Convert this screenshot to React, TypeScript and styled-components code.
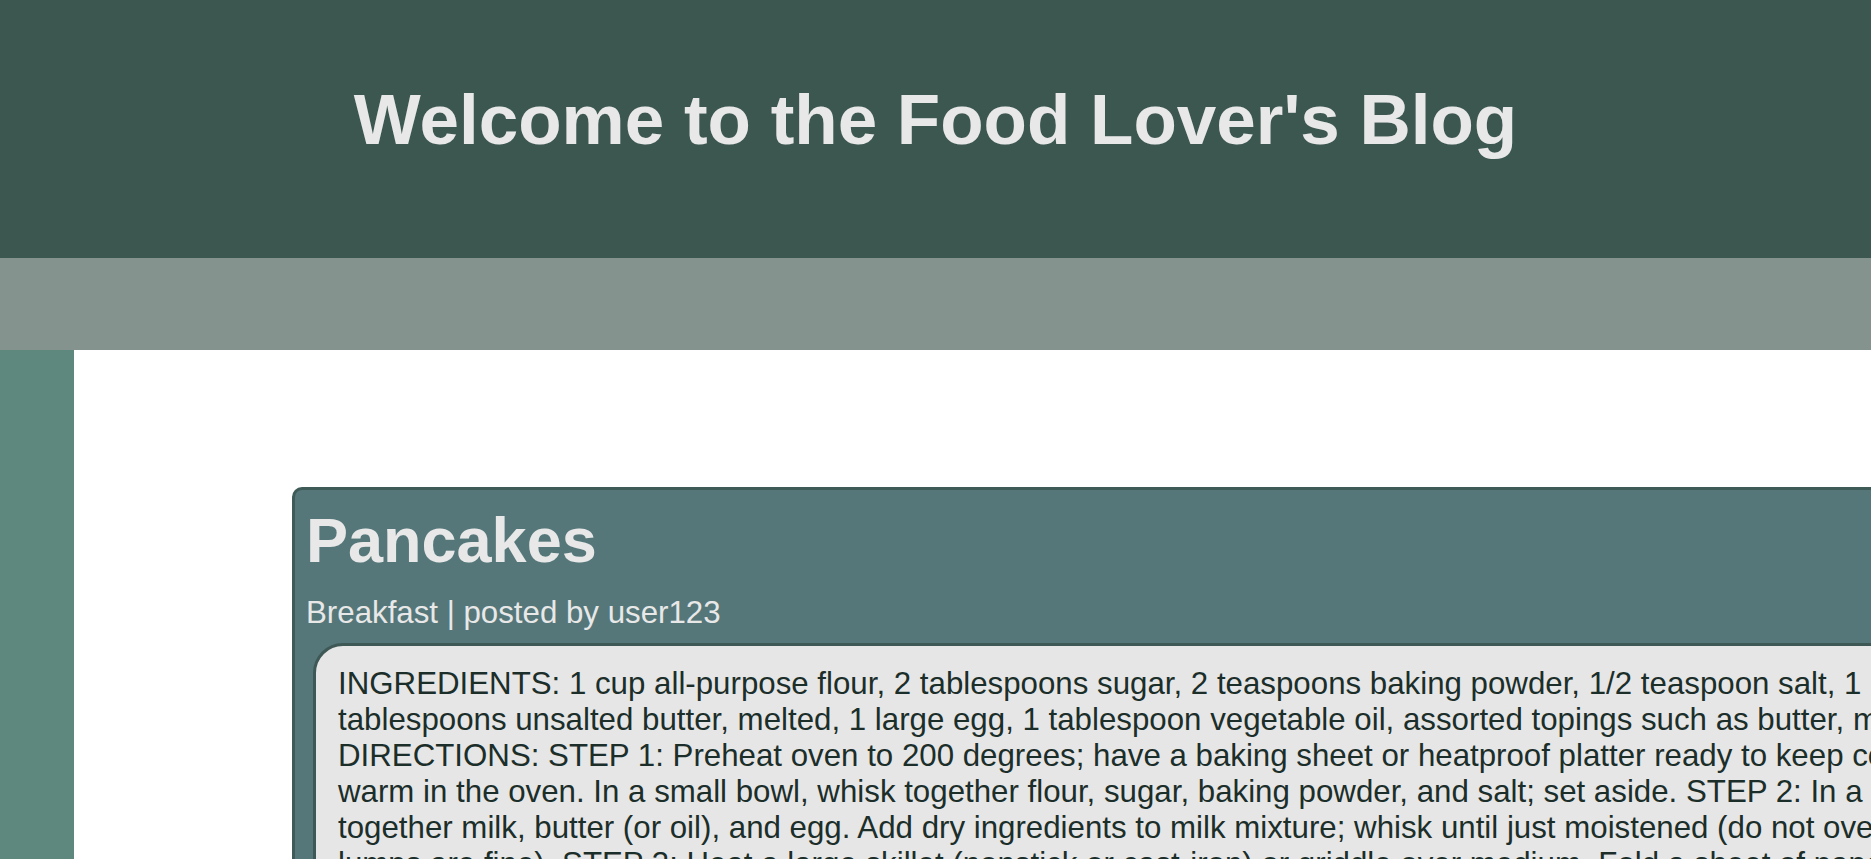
import React from 'react'
import styled, { createGlobalStyle } from 'styled-components'

const GlobalStyle = createGlobalStyle`
  html, body {
    margin: 0;
    padding: 0;
    overflow: hidden;
    background: #ffffff;
  }

  body {
    font-family: 'Liberation Sans', Arial, Helvetica, sans-serif;
  }
`

const Header = styled.header`
  background-color: #3c5750;
  box-sizing: border-box;
  height: 258px;
  padding-top: 79px;
  text-align: center;
`

const SiteTitle = styled.h1`
  color: #e8e8e8;
  font-size: 71px;
  font-weight: 700;
  margin: 0;
`

const NavBar = styled.nav`
  background-color: #84938e;
  height: 92px;
`

const Body = styled.div`
  display: flex;
  min-height: 509px;
`

const Sidebar = styled.aside`
  background-color: #5e877d;
  flex: none;
  width: 74px;
`

const Main = styled.main`
  flex: 1;
  min-width: 0;
  overflow: hidden;
  padding: 137px 0 40px 218px;
`

const PostCard = styled.article`
  background-color: #557779;
  border: 3px solid #3f5b58;
  border-radius: 10px;
  display: inline-block;
  padding: 14px 9px 12px 9px;
`

const PostTitle = styled.h2`
  color: #e8e8e8;
  font-size: 63px;
  font-weight: 700;
  margin: 0 0 19px 2px;
`

const PostMeta = styled.div`
  color: #e8e8e8;
  font-size: 31.25px;
  margin: 0 0 12px 2px;
`

const RecipeBox = styled.div`
  background-color: #e6e6e6;
  border: 3px solid #3d5855;
  border-radius: 30px 0 0 0;
  color: #1c2e2a;
  font-size: 31.25px;
  margin-left: 9px;
  padding: 20px 20px 20px 22px;
  width: 58.45em;
`

const RecipeText = styled.p`
  margin: 0;
`

const ingredients =
  'INGREDIENTS: 1 cup all-purpose flour, 2 tablespoons sugar, 2 teaspoons baking powder, 1/2 teaspoon salt, 1 cup milk, 2 tablespoons unsalted butter, melted, 1 large egg, 1 tablespoon vegetable oil, assorted topings such as butter, maple syrup.'

const directions =
  'DIRECTIONS: STEP 1: Preheat oven to 200 degrees; have a baking sheet or heatproof platter ready to keep cooked pancakes warm in the oven. In a small bowl, whisk together flour, sugar, baking powder, and salt; set aside. STEP 2: In a medium bowl, whisk together milk, butter (or oil), and egg. Add dry ingredients to milk mixture; whisk until just moistened (do not overmix; a few small lumps are fine). STEP 3: Heat a large skillet (nonstick or cast-iron) or griddle over medium. Fold a sheet of paper towel in half, and moisten with oil; carefully rub skillet with oiled paper towel. STEP 4: For each pancake, spoon 2 to 3 tablespoons of batter onto skillet, using the back of the spoon to spread batter into a round. Cook until surface of pancakes have some bubbles and a few have burst, 1 to 2 minutes. Flip carefully with a thin spatula, and cook until browned on the underside, 1 to 2 minutes more. STEP 5: Transfer to a baking sheet or platter; cover loosely with aluminum foil, and keep warm in oven. Serve warm, with desired toppings.'

const App: React.FC = () => {
  return (
    <>
      <GlobalStyle />
      <Header>
        <SiteTitle>Welcome to the Food Lover's Blog</SiteTitle>
      </Header>
      <NavBar />
      <Body>
        <Sidebar />
        <Main>
          <PostCard>
            <PostTitle>Pancakes</PostTitle>
            <PostMeta>Breakfast | posted by user123</PostMeta>
            <RecipeBox>
              <RecipeText>{ingredients}</RecipeText>
              <RecipeText>{directions}</RecipeText>
            </RecipeBox>
          </PostCard>
        </Main>
      </Body>
    </>
  )
}

export default App
